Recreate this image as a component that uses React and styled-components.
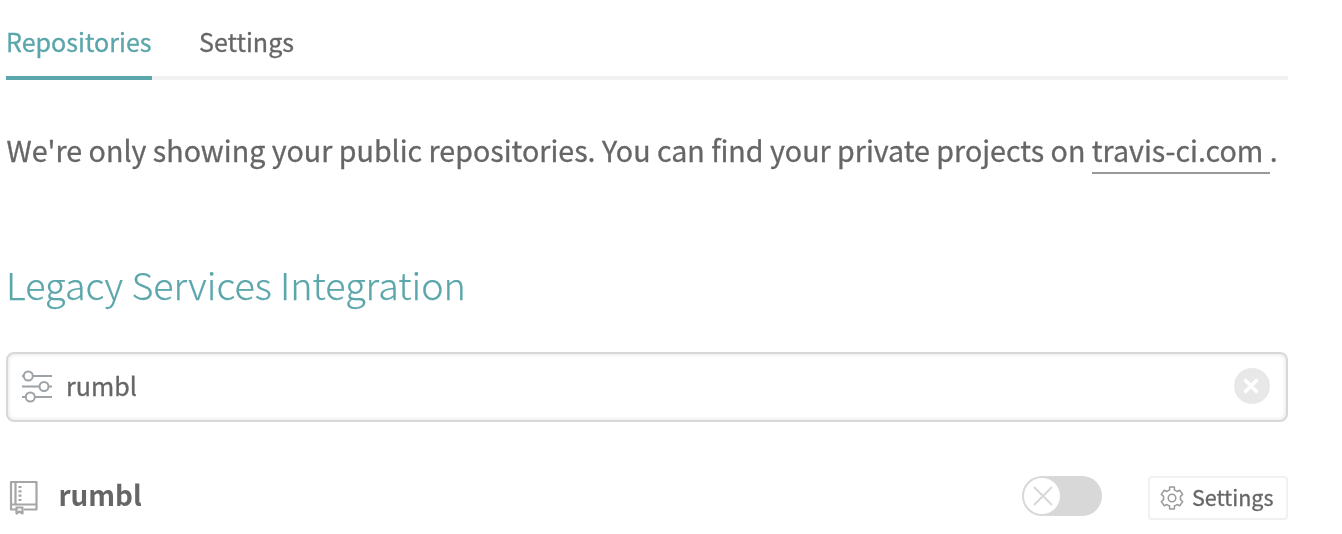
import React from 'react';
import styled, { createGlobalStyle } from 'styled-components';

const Global = createGlobalStyle`
  * { box-sizing: border-box; }
  body { margin: 0; background: #fff; color: #666; font-family: "Noto Sans CJK JP", "Noto Sans", sans-serif; -webkit-text-stroke: 0.3px currentColor; }
`;
const Page = styled.main`
  width: 1342px; height: 534px; padding: 0 54px 0 6px; overflow: hidden; will-change: transform;
`;
const Tabs = styled.nav`
  display: flex; gap: 47px; height: 80px; box-shadow: inset 0 -4px #f1f1f1;
`;
const Tab = styled.a`
  height: 80px; padding-top: 21px; font-size: 25.1px; line-height: 40px; white-space: nowrap;
  width: ${p => p.$width}px;
  color: ${p => p.$active ? '#5ba6ab' : '#666'};
  border-bottom: 4px solid ${p => p.$active ? '#5ba6ab' : 'transparent'};
`;
const Notice = styled.p`
  margin: 48px 0 0; padding-left: 0.6px; height: 46px; font-size: 28.64px; line-height: 44px; white-space: pre;
`;
const Link = styled.a`
  display: inline-block; height: 46px; border-bottom: 2px solid #999;
`;
const Title = styled.h2`
  margin: 80px 0 0; height: 60px; font-size: 37.65px; line-height: 60px; font-weight: 300; color: #5ba6ab; white-space: nowrap;
  -webkit-text-stroke-width: 0.25px;
`;
const Search = styled.div`
  display: flex; align-items: flex-start; margin-top: 38px; height: 70px; padding: 14px 16px 0 14px;
  border: 2px solid #d8d8d8; border-radius: 8px; box-shadow: inset 0 0 4px #ddd;
`;
const FilterIcon = styled.svg`
  margin-top: 0.5px;
`;
const Query = styled.span`
  flex: 1; margin: -3px 0 0 14px; font-size: 25.1px; line-height: 40px;
`;
const Row = styled.div`
  display: flex; align-items: flex-start; height: 60px; margin-top: 54px;
`;
const RepoName = styled.strong`
  flex: 1; margin: -2px 0 0 19.5px; font-size: 27.8px; line-height: 40px; font-weight: 700;
  -webkit-text-stroke-width: 0;
`;
const Book = styled.svg`
  margin: 4px 0 0 3px;
`;
const Toggle = styled.button`
  width: 80px; height: 40px; padding: 2px; border: 0; border-radius: 20px; background: #d8d8d8; margin-right: 46px;
`;
const Knob = styled.span`
  display: flex; align-items: center; justify-content: center; width: 36px; height: 36px; padding-left: 2px; border-radius: 50%; background: #fff;
`;
const SettingsButton = styled.button`
  display: flex; align-items: flex-start; gap: 8px; width: 140px; height: 44px; padding: 0 0 0 10px;
  border: 2px solid #f1f1f1; border-radius: 4px; background: #fff; color: #666; font: 400 21.5px/38px "Noto Sans CJK JP", sans-serif;
  -webkit-text-stroke: 0.3px currentColor;
  svg { margin-top: 8px; flex: none; }
`;

export default function App() {
  return (
    <Page>
      <Global />
      <Tabs>
        <Tab $active $width={146}>Repositories</Tab>
        <Tab>Settings</Tab>
      </Tabs>
      <Notice>We're only showing your public repositories. You can find your private projects on <Link>travis-ci.com </Link>.</Notice>
      <Title>Legacy Services Integration</Title>
      <Search>
        <FilterIcon width="30" height="34" viewBox="0 0 30 34" fill="none" stroke="#9ea3a8" strokeWidth="2">
          <path d="M0 7h2M11 7h19M0 17.5h17M27 17.5h3M0 28h4M13 28h17" />
          <circle cx="6.3" cy="7" r="4.5" /><circle cx="22" cy="17.5" r="4.5" /><circle cx="8.3" cy="28" r="4.5" />
        </FilterIcon>
        <Query>rumbl</Query>
        <svg width="36" height="36" viewBox="0 0 36 36">
          <circle cx="18" cy="18" r="18" fill="#e8e8e8" />
          <path d="M10.5 11.5l13 13M23.5 11.5l-13 13" stroke="#fff" strokeWidth="3.5" />
        </svg>
      </Search>
      <Row>
        <Book width="30" height="35" viewBox="0 0 30 35" fill="none" stroke="#a6a6a6" strokeWidth="2.2" strokeLinejoin="round">
          <path d="M7 29.5H2V2h25.500v27.5H15M2 24.5h25.500M6.5 2v22.5" />
          <path d="M9.5 7h3M9.5 11.3h3M9.5 15.6h3M9.5 20h3" />
          <path d="M7.5 27.5h6v6l-3-2-3 2z" />
        </Book>
        <RepoName>rumbl</RepoName>
        <Toggle aria-label="Enable repository">
          <Knob>
            <svg width="20" height="20" viewBox="0 0 20 20" stroke="#d8d8d8" strokeWidth="2"><path d="M1 1l18 18M19 1L1 19" /></svg>
          </Knob>
        </Toggle>
        <SettingsButton>
          <svg width="24" height="24" viewBox="0 0 24 24" fill="none" stroke="#999" strokeWidth="1.5" strokeLinejoin="round">
            <path d="M9.6 1h4.8v3q1.4.5 2.7 1.5l2.8-1.2L22.7 8.5l-2.3 1.9q.3 1.6 0 3.2l2.3 1.9-2.8 4.2-2.8-1.2q-1.3 1-2.7 1.5v3H9.6v-3q-1.4-.5-2.7-1.5l-2.8 1.2L1.3 15.5l2.3-1.9q-.3-1.6 0-3.2L1.3 8.5l2.8-4.2 2.8 1.2Q8.2 4.5 9.6 4z" />
            <circle cx="12" cy="12" r="3.8" />
          </svg>
          Settings
        </SettingsButton>
      </Row>
    </Page>
  );
}
